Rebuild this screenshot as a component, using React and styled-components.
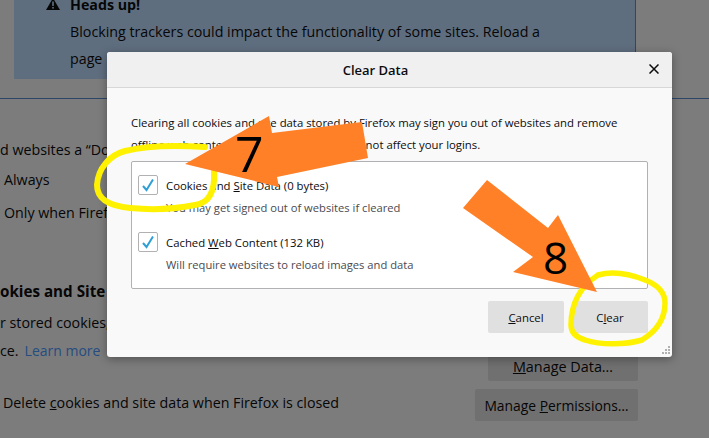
import React from "react";
import styled, { createGlobalStyle } from "styled-components";

const Global = createGlobalStyle`
  html, body { margin: 0; padding: 0; background: #f9f9fa; }
  body { font-family: "Open Sans", "Noto Sans", sans-serif; color: #0c0c0d; }
`;

const Page = styled.div`
  position: relative;
  width: 709px;
  height: 438px;
  overflow: hidden;
  background: #f9f9fa;
`;

const Settings = styled.div`
  display: flex;
  flex-direction: column;
  font-size: 14.25px;
  line-height: 22px;
  white-space: nowrap;
`;

const Banner = styled.div`
  margin-left: 14px;
  width: 622px;
  height: 79px;
  box-sizing: border-box;
  background: #bedcff;
  border-right: 1px solid #5a8fd0;
  display: grid;
  grid-template-columns: 14px 1fr;
  column-gap: 10px;
  padding-left: 32px;
`;

const BannerIcon = styled.svg`
  width: 14px;
  height: 12px;
  margin-top: -2px;
`;

const BannerText = styled.div`
  margin-top: -6px;
`;

const BannerTitle = styled.div`
  font-weight: 700;
  height: 24px;
`;

const BannerLine = styled.div`
  height: 27px;
  line-height: 27px;
`;

const Divider = styled.div`
  height: 1px;
  margin-top: 19px;
  background: #5a8fd0;
`;

const Line = styled.div`
  height: 22px;
  margin-top: ${p => p.$top}px;
  padding-left: ${p => p.$left || 0}px;
  font-weight: ${p => (p.$bold ? 700 : 400)};
  font-size: ${p => (p.$bold ? "15.2px" : "inherit")};
`;

const Link = styled.span`
  color: #4a9aff;
  margin-left: 6px;
  font-size: 14px;
`;

const BgActions = styled.div`
  position: absolute;
  right: 71px;
  top: 351px;
  display: flex;
  flex-direction: column;
  align-items: flex-end;
  gap: 8px;
`;

const BgButton = styled.div`
  height: ${p => p.$h}px;
  width: ${p => p.$w}px;
  background: #e0e0e1;
  border-radius: 2px;
  display: flex;
  align-items: center;
  justify-content: center;
  font-size: ${p => p.$size}px;
`;

const Backdrop = styled.div`
  position: absolute;
  inset: 0;
  background: rgba(0, 0, 0, 0.5);
`;

const Dialog = styled.div`
  position: absolute;
  left: 107px;
  top: 52px;
  width: 565px;
  height: 305px;
  display: flex;
  flex-direction: column;
  background: #f9f9fa;
  border-radius: 3px;
  box-shadow: 0 2px 10px rgba(0, 0, 0, 0.35);
`;

const DialogHeader = styled.div`
  height: 36px;
  box-sizing: border-box;
  flex: none;
  background: #f0f0f1;
  border-bottom: 1px solid #d7d7d8;
  border-radius: 3px 3px 0 0;
  display: flex;
  align-items: center;
  justify-content: center;
  position: relative;
  padding-right: 28px;
  font-size: 13px;
  font-weight: 600;
`;

const Close = styled.svg`
  position: absolute;
  right: 13px;
  top: 12px;
  width: 10px;
  height: 10px;
`;

const DialogBody = styled.div`
  flex: 1;
  display: flex;
  flex-direction: column;
  padding: 24px 24px 24px;
  font-size: 11.35px;
`;

const Intro = styled.div`
  line-height: 22px;
  height: 49px;
  white-space: nowrap;
`;

const OptionBox = styled.div`
  height: 128px;
  box-sizing: border-box;
  background: #fff;
  border: 1px solid #b1b1b3;
  border-radius: 2px;
  padding: 14px 6px;
  display: flex;
  flex-direction: column;
  gap: 14px;
`;

const Option = styled.div`
  display: grid;
  grid-template-columns: 20px 1fr;
  column-gap: 8px;
`;

const Check = styled.div`
  width: 18px;
  height: 18px;
  margin-top: -1px;
  border: 1px solid #b1b1b3;
  border-radius: 2px;
  background: #fff;
  display: flex;
  align-items: center;
  justify-content: center;
`;

const OptionLabel = styled.div`
  line-height: 20px;
`;

const OptionHint = styled.div`
  color: #4a4a4f;
  font-size: 11.2px;
  line-height: 22px;
  margin-top: 1px;
`;

const Buttons = styled.div`
  display: flex;
  justify-content: flex-end;
  gap: 8px;
  margin-top: 12px;
`;

const Button = styled.div`
  width: 76px;
  height: 32px;
  border-radius: 2px;
  background: #e0e0e1;
  display: flex;
  align-items: center;
  justify-content: center;
  font-size: 11.4px;
`;

const Grip = styled.svg`
  position: absolute;
  right: 1px;
  bottom: 2px;
  width: 10px;
  height: 10px;
`;

const Marks = styled.svg`
  position: absolute;
  inset: 0;
  width: 709px;
  height: 438px;
`;

const Digit = styled.div`
  position: absolute;
  left: ${p => p.$x}px;
  top: ${p => p.$y}px;
  font-family: "Open Sans", sans-serif;
  font-weight: 400;
  font-size: ${p => p.$size}px;
  line-height: 50px;
  color: #000;
`;

const Tick = () => (
  <svg width="14" height="14" viewBox="0 0 14 14">
    <path d="M2 8 L5.5 12 L12 1.5" fill="none" stroke="#2f9fd8" strokeWidth="2" />
  </svg>
);

export default function App() {
  return (
    <Page>
      <Global />
      <Settings>
        <Banner>
          <BannerIcon viewBox="0 0 14 12">
            <path d="M7 0 L14 12 L0 12 Z" fill="#0c0c0d" />
            <rect x="6.2" y="3.5" width="1.6" height="4.5" fill="#bedcff" />
            <rect x="6.2" y="9" width="1.6" height="1.6" fill="#bedcff" />
          </BannerIcon>
          <BannerText>
            <BannerTitle>Heads up!</BannerTitle>
            <BannerLine>Blocking trackers could impact the functionality of some sites. Reload a</BannerLine>
            <BannerLine>page</BannerLine>
          </BannerText>
        </Banner>
        <Divider />
        <Line $top={40}>d websites a “Do Not Track” signal that you don’t want to be tracked</Line>
        <Line $top={8} $left={4}>Always</Line>
        <Line $top={11} $left={4}>Only when Firefox is set to block known trackers</Line>
        <Line $top={56} $bold>okies and Site Data</Line>
        <Line $top={10}>r stored cookies, site data and cache are using disk space.</Line>
        <Line $top={6}>ce.<Link>Learn more</Link></Line>
        <Line $top={30} $left={3}>Delete <u>c</u>ookies and site data when Firefox is closed</Line>
      </Settings>
      <BgActions>
        <BgButton $w={150} $h={30} $size={14.4}><span><u>M</u>anage Data…</span></BgButton>
        <BgButton $w={163} $h={32} $size={13.85}><span>Manage <u>P</u>ermissions…</span></BgButton>
      </BgActions>
      <Backdrop />
      <Dialog>
        <DialogHeader>
          Clear Data
          <Close viewBox="0 0 10 10">
            <path d="M0.5 0.5 L9.5 9.5 M9.5 0.5 L0.5 9.5" stroke="#0c0c0d" strokeWidth="1.5" />
          </Close>
        </DialogHeader>
        <DialogBody>
          <Intro>
            Clearing all cookies and site data stored by Firefox may sign you out of websites and remove<br />
            offline web content. Clearing cache data will not affect your logins.
          </Intro>
          <OptionBox>
            <Option>
              <Check><Tick /></Check>
              <div>
                <OptionLabel>Cookies and <u>S</u>ite Data (0 bytes)</OptionLabel>
                <OptionHint>You may get signed out of websites if cleared</OptionHint>
              </div>
            </Option>
            <Option>
              <Check><Tick /></Check>
              <div>
                <OptionLabel>Cached <u>W</u>eb Content (132 KB)</OptionLabel>
                <OptionHint>Will require websites to reload images and data</OptionHint>
              </div>
            </Option>
          </OptionBox>
          <Buttons>
            <Button><span><u>C</u>ancel</span></Button>
            <Button><span>C<u>l</u>ear</span></Button>
          </Buttons>
        </DialogBody>
        <Grip viewBox="0 0 10 10">
          <g fill="#b1b1b3">
            <rect x="7" y="1" width="2" height="2" />
            <rect x="4" y="4" width="2" height="2" />
            <rect x="7" y="4" width="2" height="2" />
            <rect x="1" y="7" width="2" height="2" />
            <rect x="4" y="7" width="2" height="2" />
            <rect x="7" y="7" width="2" height="2" />
          </g>
        </Grip>
      </Dialog>
      <Marks viewBox="0 0 709 438">
        <path d="M214 172 C215 190 210 203 195 205 C170 210 150 210 130 208 C110 206 97 200 97 185 C98 168 110 155 125 151 C145 146 175 145 205 147" fill="none" stroke="#fff200" strokeWidth="6" strokeLinecap="round" />
        <path d="M598 275 C612 271 630 274 645 280 C658 285 665 292 665 303 C665 320 655 332 642 340 C625 345 600 345 585 340 C575 337 571 332 571 325 C571 305 578 288 598 275" fill="none" stroke="#fff200" strokeWidth="5.5" strokeLinecap="round" />
        <polygon points="185,164 269,116 272,133 362,122 368,158 277,177 279,187" fill="#ff8026" />
        <polygon points="487,180 548,228 558,215 597,292 513,272 533,257 463,208" fill="#ff8026" />
      </Marks>
      <Digit $x={235} $y={128} $size={50}>7</Digit>
      <Digit $x={543} $y={232} $size={44}>8</Digit>
    </Page>
  );
}
